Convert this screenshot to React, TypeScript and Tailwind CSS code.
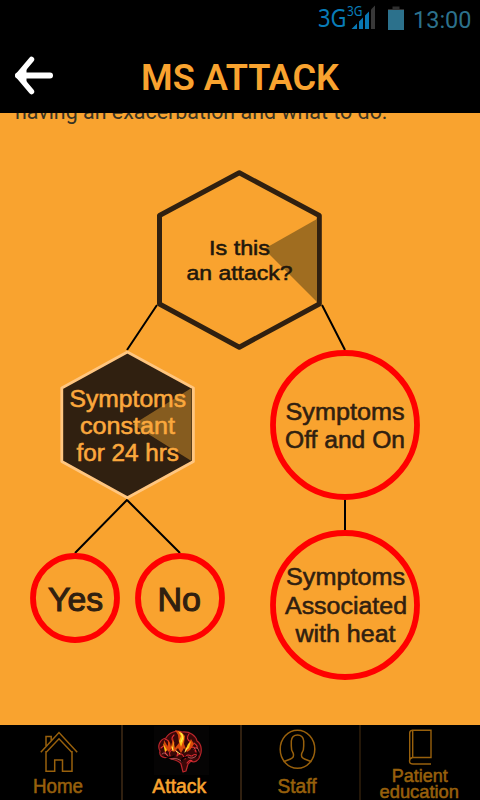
type LabelProps = { x: number; y: number; w: number; size: number; fill: string; weight?: number; children: string };

function Label({ x, y, w, size, fill, weight = 0.55, children }: LabelProps) {
  return (
    <text x={x} y={y} textLength={w} lengthAdjust="spacingAndGlyphs" fontSize={size} fill={fill} stroke={fill} strokeWidth={weight}>
      {children}
    </text>
  );
}

function StatusBar() {
  return (
    <div className="flex h-10 items-center justify-end bg-black">
      <svg className="h-10 w-[172px] font-['Noto_Sans',sans-serif]" viewBox="308 0 172 40">
        <text x="318" y="27" fontSize="26" textLength="28.5" lengthAdjust="spacingAndGlyphs" fill="#087cb8">3G</text>
        <text x="347" y="16" fontSize="13.5" textLength="15.5" lengthAdjust="spacingAndGlyphs" fill="#087cb8">3G</text>
        <path d="M351.5 29 L357 23.5 V29Z M359 21.5 L363 17.5 V29 H359Z M365 15.5 L369 11.5 V29 H365Z" fill="#0878b4" />
        <path d="M371 9.5 L375 5.5 V29 H371Z" fill="#383838" />
        <path d="M388 9 H392.5 V6.5 H399.5 V9 H404 V11 H388Z" fill="#303030" />
        <path d="M388 10 H404 V30 H388Z" fill="#2c718c" />
        <text x="413" y="28" fontSize="24" textLength="58.5" lengthAdjust="spacingAndGlyphs" fill="#2c718c" className="font-['Roboto',sans-serif]">13:00</text>
      </svg>
    </div>
  );
}

function Header() {
  return (
    <header className="flex h-[73px] items-center bg-black pb-[4px] pl-[14px]">
      <svg className="h-10 w-10 shrink-0" viewBox="0 0 40 40" fill="none" stroke="#fff" strokeLinecap="round" strokeLinejoin="round">
        <path d="M4 20.5 H36" strokeWidth="6" />
        <path d="M17.5 4.4 L4 20.5 L17.5 36.6" strokeWidth="5.4" />
        <path d="M3 20.5 L11 12 V29Z" fill="#fff" strokeWidth="3" />
      </svg>
      <h1 className="ml-[87px] font-['Roboto',sans-serif] leading-none font-semibold text-[#f9a32f]">
        <svg className="h-[50px] w-[200px]" viewBox="141 49 200 50">
          <text x="141" y="89" fontSize="36.3" textLength="198" lengthAdjust="spacingAndGlyphs" fill="#f9a32f">MS ATTACK</text>
        </svg>
      </h1>
    </header>
  );
}

function Diagram() {
  return (
    <svg className="h-[592px] w-[480px] font-['Liberation_Sans',Arial,sans-serif]" viewBox="0 133 480 592">
      <g stroke="#000" strokeWidth="2" fill="none">
        <path d="M157 305 L127 350 M322 305 L345 350 M345 499 V531 M75 553 L127 500 L180 553" />
      </g>
      <path d="M239.3 172.8 L319.3 215.5 V304 L239.3 347.2 L159.5 304 V215.5Z" fill="none" stroke="#302010" strokeWidth="5" strokeLinejoin="round" />
      <path d="M264 249 L317 219 V302Z" fill="#a06d20" />
      <Label x={209} y={255} w={61} size={21} fill="#21170c">Is this</Label>
      <Label x={186.5} y={280} w={106} size={21} fill="#21170c">an attack?</Label>

      <path d="M127.4 352 L193.4 388 V461.5 L127.4 497.8 L61.8 461.5 V388Z" fill="#302010" stroke="#ffc680" strokeWidth="2.8" strokeLinejoin="round" />
      <path d="M133 424.5 L191.5 388 V461Z" fill="#865c1f" />
      <Label x={69.5} y={406.5} w={116.5} size={23} fill="#fba83d">Symptoms</Label>
      <Label x={80} y={433.5} w={95} size={23} fill="#fba83d">constant</Label>
      <Label x={76.5} y={460.5} w={102.5} size={23} fill="#fba83d">for 24 hrs</Label>

      <g fill="none" stroke="#f00" strokeWidth="5.8">
        <circle cx="75" cy="598" r="42" />
        <circle cx="180" cy="598" r="42" />
        <circle cx="345" cy="425" r="72" />
        <circle cx="345" cy="605" r="72" />
      </g>
      <Label x={48} y={611} w={55} size={33.5} fill="#302010" weight={1.1}>Yes</Label>
      <Label x={157.5} y={611} w={43.5} size={33.5} fill="#302010" weight={1.1}>No</Label>
      <Label x={285.5} y={419.5} w={119} size={23.5} fill="#302010">Symptoms</Label>
      <Label x={285} y={448} w={120} size={23.5} fill="#302010">Off and On</Label>
      <Label x={286} y={585} w={119} size={23.5} fill="#302010">Symptoms</Label>
      <Label x={285} y={613.5} w={122} size={23.5} fill="#302010">Associated</Label>
      <Label x={295.5} y={642} w={100} size={23.5} fill="#302010">with heat</Label>
    </svg>
  );
}

function Brain() {
  return (
    <g fill="none" strokeLinecap="round" strokeLinejoin="round">
      <path d="M154 726 H209 V775 H154Z" fill="#050404" />
      <path d="M160 751 C157 746 160 739 166 738 C169 732 177 730 182 732 C190 731 196 736 197 741 C202 744 202 752 200 756 C199 761 194 763 191 761 L188 764 L186 771 L183 772 L181 764 C178 759 170 760 168 757 C162 759 159 755 160 751Z" fill="#3a0808" stroke="#b9252b" strokeWidth="1.2" />
      <path d="M161 748 q5 -5 7 1 q-5 3 -1 6 M165 739 q6 2 3 7 M170 756 q-2 -6 4 -6 q5 1 3 6 M177 756 q4 -5 7 1 M185 759 q1 -6 6 -3 M189 748 q7 -3 7 4 M194 743 q6 4 1 8 M192 756 q3 -3 6 0 M187 763 q3 -4 5 -2 M174 735 q-4 4 0 8 M189 734 q-4 5 2 8" stroke="#e02b32" strokeWidth="1.1" />
      <path d="M194 749 q4 -4 5 3 M171 759 q7 -2 11 3 M188 757 q4 3 8 -1 M162 754 q3 -3 6 2" stroke="#c9686c" strokeWidth="0.8" />
      <path d="M167 750 Q163 746 164 740 L168 747 L168 740 Q171 743 171 747 L173 738 L175 748 L179 743 L178 735 L175 730 L181 732 L185 736 L184 744 L186 749 L191 739 L194 744 L190 750 L187 752 L184 748 L181 753 L178 748 L174 752 L171 749 L169 752Z" fill="#d9480c" />
      <path d="M178 731 L183 734 L184 739 L181 747 L179 741 L181 736Z M170 741 L172 748 L174 740 L173 752Z M163 743 L167 750 L165 752Z M191 741 L189 748 L185 751 L188 744Z" fill="#ffc414" />
      <path d="M181 733 L183 737 L181 742 M172 747 L173 750 M187 748 L185 752 M176 751 L180 754" stroke="#fff05b" strokeWidth="1" />
      <path d="M165 756 q5 3 9 0 M182 762 q-2 -4 5 -5 M196 749 q4 3 1 8" stroke="#070202" strokeWidth="1.3" />
    </g>
  );
}

function BottomNav() {
  return (
    <nav className="grid h-[75px] grid-cols-[121px_119px_119px_121px] bg-black font-['Liberation_Sans',Arial,sans-serif]">
      <button className="h-[75px]">
        <svg className="h-[75px] w-[121px]" viewBox="0 725 121 75">
          <g fill="none" stroke="#98600c" strokeWidth="1.5">
            <path d="M40.8 752.3 L59 732.5 L77.2 752.3 M46 751 V771.3 H54.7 V760 H62.5 V771.3 H72 V751 M46 752.5 L59 738.8 L72 752.5 M46 746 V736.5 H51.2 V740.5" />
          </g>
          <Label x={33} y={793} w={50} size={19.5} fill="#98600c">Home</Label>
        </svg>
      </button>
      <button className="h-[75px] border-l-2 border-[#302010]">
        <svg className="h-[75px] w-[117px]" viewBox="123 725 117 75">
          <Brain />
          <Label x={152.3} y={793} w={54} size={19.5} fill="#f9a32f">Attack</Label>
        </svg>
      </button>
      <button className="h-[75px] border-l-2 border-[#302010]">
        <svg className="h-[75px] w-[117px]" viewBox="242 725 117 75">
          <g fill="none" stroke="#98600c" strokeWidth="1.5">
            <ellipse cx="297.5" cy="749.2" rx="17.3" ry="19" />
            <path d="M283.5 761.8 L290.5 759 Q294.5 757.5 293.3 753.5 Q291 750 291.3 746 V741 Q292 735 297.5 735 Q303 735 303.7 741 V746 Q304 750 301.7 753.5 Q300.5 757.5 304.5 759 L311.5 761.8" />
          </g>
          <Label x={277.5} y={793} w={39} size={19.5} fill="#98600c">Staff</Label>
        </svg>
      </button>
      <button className="h-[75px] border-l-2 border-[#241708]">
        <svg className="h-[75px] w-[119px]" viewBox="361 725 119 75">
          <path d="M412.7 757.3 V730.2 H431 V757.5 H412.7 Q409.5 758 409.5 761 Q409.5 764 413 764 H431 M412.7 730.2 Q409.7 730.2 409.7 733 V761" fill="none" stroke="#98600c" strokeWidth="1.4" />
          <Label x={391.7} y={781.8} w={56} size={18.5} fill="#98600c">Patient</Label>
          <Label x={379.5} y={797.8} w={79.5} size={18.5} fill="#98600c">education</Label>
        </svg>
      </button>
    </nav>
  );
}

export default function App() {
  return (
    <main className="flex h-[800px] w-[480px] flex-col overflow-hidden bg-[#f9a32f]">
      <StatusBar />
      <Header />
      <div className="h-5 overflow-hidden">
        <svg className="h-5 w-[480px] font-['Roboto',sans-serif]" viewBox="0 113 480 20">
          <text x="15" y="119" fontSize="22" textLength="372.5" lengthAdjust="spacingAndGlyphs" fill="#383323">having an exacerbation and what to do.</text>
        </svg>
      </div>
      <Diagram />
      <BottomNav />
    </main>
  );
}
